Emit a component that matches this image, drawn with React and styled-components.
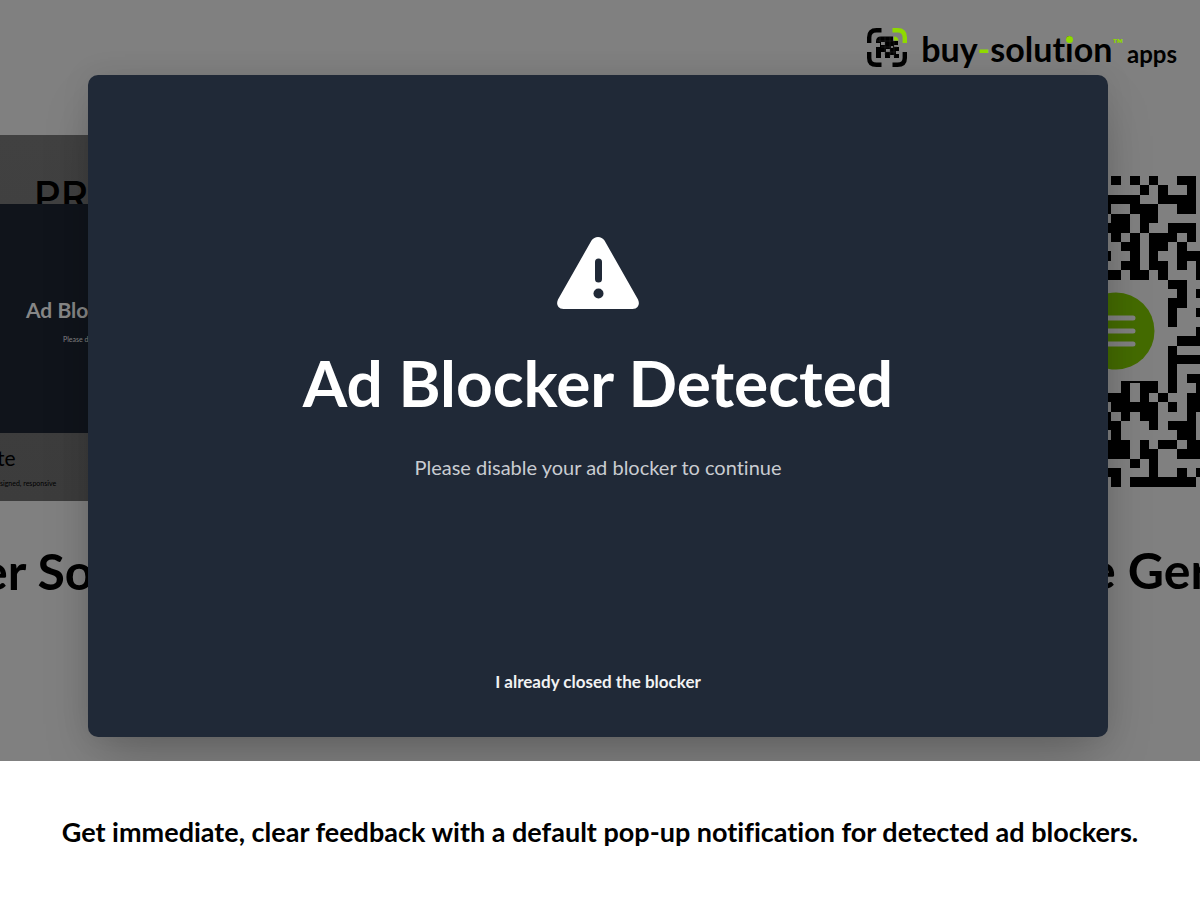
import React from "react";
import styled, { createGlobalStyle } from "styled-components";

const GlobalStyle = createGlobalStyle`
  *, *::before, *::after { box-sizing: border-box; }
  body {
    margin: 0;
    background: #fff;
    font-family: Lato, "Open Sans", sans-serif;
    font-variant-ligatures: none;
  }
  h1, h2, p { margin: 0; }
`;

const Page = styled.main`
  display: flex;
  flex-direction: column;
  min-height: 100vh;
  overflow: hidden;
`;

const Stage = styled.section`
  position: relative;
  padding: 75px 92px 24px 88px;
  background: #808080;
  overflow: hidden;
`;

const Backdrop = styled.div`
  position: absolute;
  inset: 0;
  display: flex;
  justify-content: space-between;
  color: #000;
`;

const Column = styled.div`
  display: flex;
  flex-direction: column;
  width: 92px;
  padding-top: ${(p) => p.$top}px;
  white-space: nowrap;
`;

const Tile = styled.div`
  height: 366px;
  background: linear-gradient(#414141, #3c3c3c);
  overflow: hidden;
`;

const TileTitle = styled.p`
  height: 69px;
  padding: 44px 0 0 34px;
  font-family: Inter, sans-serif;
  font-size: 42px;
  line-height: 36px;
  font-weight: 500;
  overflow: hidden;
`;

const TilePanel = styled.div`
  height: 229px;
  padding-top: 94px;
  background: #10141b;
  color: #868686;
`;

const PanelTitle = styled.p`
  padding-left: 26px;
  font-size: 21px;
  line-height: 24px;
  font-weight: 700;
`;

const Tiny = styled.p`
  padding-left: ${(p) => p.$indent}px;
  margin-top: ${(p) => p.$gap}px;
  font-size: 7px;
  line-height: 10px;
`;

const TileCaption = styled.p`
  margin: 13px 0 0 -3px;
  font-size: 21px;
  line-height: 24px;
`;

const CardHeading = styled.h2`
  margin: ${(p) => p.$top}px 0 0 -19px;
  font-size: 50px;
  line-height: 60px;
  font-weight: 700;
`;

const QrCode = styled.svg`
  display: block;
  width: 92px;
  height: 312px;
`;

const Dialog = styled.section`
  position: relative;
  display: flex;
  flex-direction: column;
  align-items: center;
  padding: 161px 24px 39px;
  border-radius: 10px;
  background: #202937;
  color: #fff;
  text-align: center;
  box-shadow: 0 24px 50px -12px rgba(0, 0, 0, 0.25), 0 0 30px rgba(0, 0, 0, 0.08);
`;

const WarningIcon = styled.svg`
  width: 84px;
  height: 74px;
`;

const DialogTitle = styled.h1`
  margin-top: 35px;
  font-size: 64px;
  line-height: 76px;
  font-weight: 700;
`;

const DialogText = styled.p`
  margin-top: 32px;
  color: #c9ccd1;
  font-size: 20px;
  line-height: 28px;
`;

const DialogButton = styled.button`
  margin-top: 185px;
  padding: 4px 12px;
  border: 0;
  background: none;
  color: #f1f2f3;
  font-family: inherit;
  font-size: 17px;
  line-height: 24px;
  font-weight: 700;
  cursor: pointer;
`;

const Brand = styled.a`
  position: absolute;
  top: 26px;
  right: 23px;
  display: flex;
  align-items: flex-start;
  color: #000;
  text-decoration: none;
`;

const BrandMark = styled.svg`
  width: 42px;
  height: 41px;
  margin: 1px 13px 0 0;
`;

const BrandName = styled.span`
  font-size: 34px;
  line-height: 46px;
  font-weight: 700;
`;

const Accent = styled.span`
  color: #8fd900;
`;

const DottedI = styled.span`
  position: relative;

  &::after {
    content: "";
    position: absolute;
    top: 8px;
    left: 1px;
    width: 7px;
    height: 7px;
    border-radius: 50%;
    background: #8fd900;
  }
`;

const Trademark = styled.span`
  margin-top: 11px;
  color: #8fd900;
  font-size: 14px;
  line-height: 14px;
  font-weight: 700;
`;

const BrandSuffix = styled.span`
  margin: 14px 0 0 4px;
  font-size: 24px;
  line-height: 28px;
  font-weight: 700;
`;

const Caption = styled.p`
  padding: 55px 24px;
  color: #000;
  font-size: 27px;
  line-height: 32px;
  font-weight: 700;
  text-align: center;
`;

const QR_ROWS = [
  ".#.#.#..##.",
  "....#.#..#.",
  "####..####.",
  "#..###..##.",
  ".##.##.....",
  "###.#..###.",
  ".#.#.###.#.",
  "..##.##.#..",
  "#..#.#..###",
  "..##.##.#.#",
  "##.##.#...#",
  ".......##..",
  "........#.#",
  ".......##..",
  ".......#..#",
  ".......#...",
  "..........#",
  "........###",
  ".......#...",
  ".......####",
  ".......#...",
  "..####.#.##",
  "..#.##.#..#",
  "###.#.#..##",
  ".#####.#.##",
  "#.#.##...#.",
  "##...#.###.",
  ".#......##.",
  "###.#.##.##",
  "###.##..###",
  "...#.#.....",
  "##...#..#.#",
  ".#.#######.",
];

const MODULE = 9.42;

function Qr() {
  return (
    <QrCode viewBox="0 0 92 312" shapeRendering="crispEdges" aria-hidden="true">
      {QR_ROWS.map((row, y) =>
        [...row].map((cell, x) =>
          cell === "#" ? (
            <rect key={`${x}-${y}`} x={(x - 1) * MODULE + 3.3} y={y * MODULE} width={MODULE} height={MODULE} />
          ) : null
        )
      )}
      <rect x="0" y="105" width="58" height="100" fill="#808080" />
      <g shapeRendering="auto">
        <circle cx="8" cy="155" r="38.5" fill="#446b00" />
        <path d="M-10 142H25M-10 155H25M-10 168H25" stroke="#808080" strokeWidth="5" strokeLinecap="round" />
      </g>
    </QrCode>
  );
}

function Mark() {
  return (
    <BrandMark viewBox="0 0 42 41" fill="none" aria-hidden="true">
      <g strokeWidth="4.4">
        <path stroke="#000" d="M15.5 3.2H10.5Q3.2 3.2 3.2 10.5V16M3.2 25V31Q3.2 37.8 10.5 37.8H15.5M26.5 37.8H31.5Q38.8 37.8 38.8 31V25" />
        <path stroke="#8fd900" d="M26.5 3.2H31.5Q38.8 3.2 38.8 10.5V16" />
      </g>
      <path fill="#000" d="M10 14.5Q10 9.5 15 9.5H27V14H32V18H28V20H33V24H30V27H33V31H28V28H24V31H19V25H15V31H10V20H14V16H10Z" />
      <path fill="#8fd900" d="M28 9.500Q32 9.500 32.500 13.500H28Z" />
      <path fill="#808080" d="M15 15H19V18H15ZM20 22H24V25H20ZM25 19H27V21H25Z" />
      <path stroke="#333" strokeWidth=".4" d="M14 10V15M19 10V28M24 10V30M28 14V30M11 14H28M15 20H31M19 25H30" />
    </BrandMark>
  );
}

export default function App() {
  return (
    <>
      <GlobalStyle />
      <Page>
        <Stage>
          <Backdrop>
            <Column $top={135}>
              <Tile>
                <TileTitle>PR</TileTitle>
                <TilePanel>
                  <PanelTitle>Ad Blo</PanelTitle>
                  <Tiny $indent={63} $gap={12}>Please d</Tiny>
                </TilePanel>
                <TileCaption>te</TileCaption>
                <Tiny $indent={0} $gap={8}>signed, responsive</Tiny>
              </Tile>
              <CardHeading $top={40}>er So</CardHeading>
            </Column>
            <Column $top={176}>
              <Qr />
              <CardHeading $top={52}>e Ger</CardHeading>
            </Column>
          </Backdrop>
          <Dialog role="dialog" aria-labelledby="dialog-title">
            <WarningIcon viewBox="0 0 84 74" aria-hidden="true">
              <path fill="#fff" d="M35.500 4.500Q38 1 42 1Q46 1 48.500 4.500L82 63.500Q84 68 81.500 71Q80 73 76.500 73H7.500Q4 73 2.500 71Q0 68 2 63.500Z" />
              <path stroke="#202937" strokeWidth="7" strokeLinecap="round" d="M42.500 26V43" />
              <circle cx="42.500" cy="57.500" r="5" fill="#202937" />
            </WarningIcon>
            <DialogTitle id="dialog-title">Ad Blocker Detected</DialogTitle>
            <DialogText>Please disable your ad blocker to continue</DialogText>
            <DialogButton type="button">I already closed the blocker</DialogButton>
          </Dialog>
          <Brand href="#">
            <Mark />
            <BrandName>
              buy<Accent>-</Accent>solut<DottedI>i</DottedI>on
            </BrandName>
            <Trademark>™</Trademark>
            <BrandSuffix>apps</BrandSuffix>
          </Brand>
        </Stage>
        <Caption>Get immediate, clear feedback with a default pop-up notification for detected ad blockers.</Caption>
      </Page>
    </>
  );
}
